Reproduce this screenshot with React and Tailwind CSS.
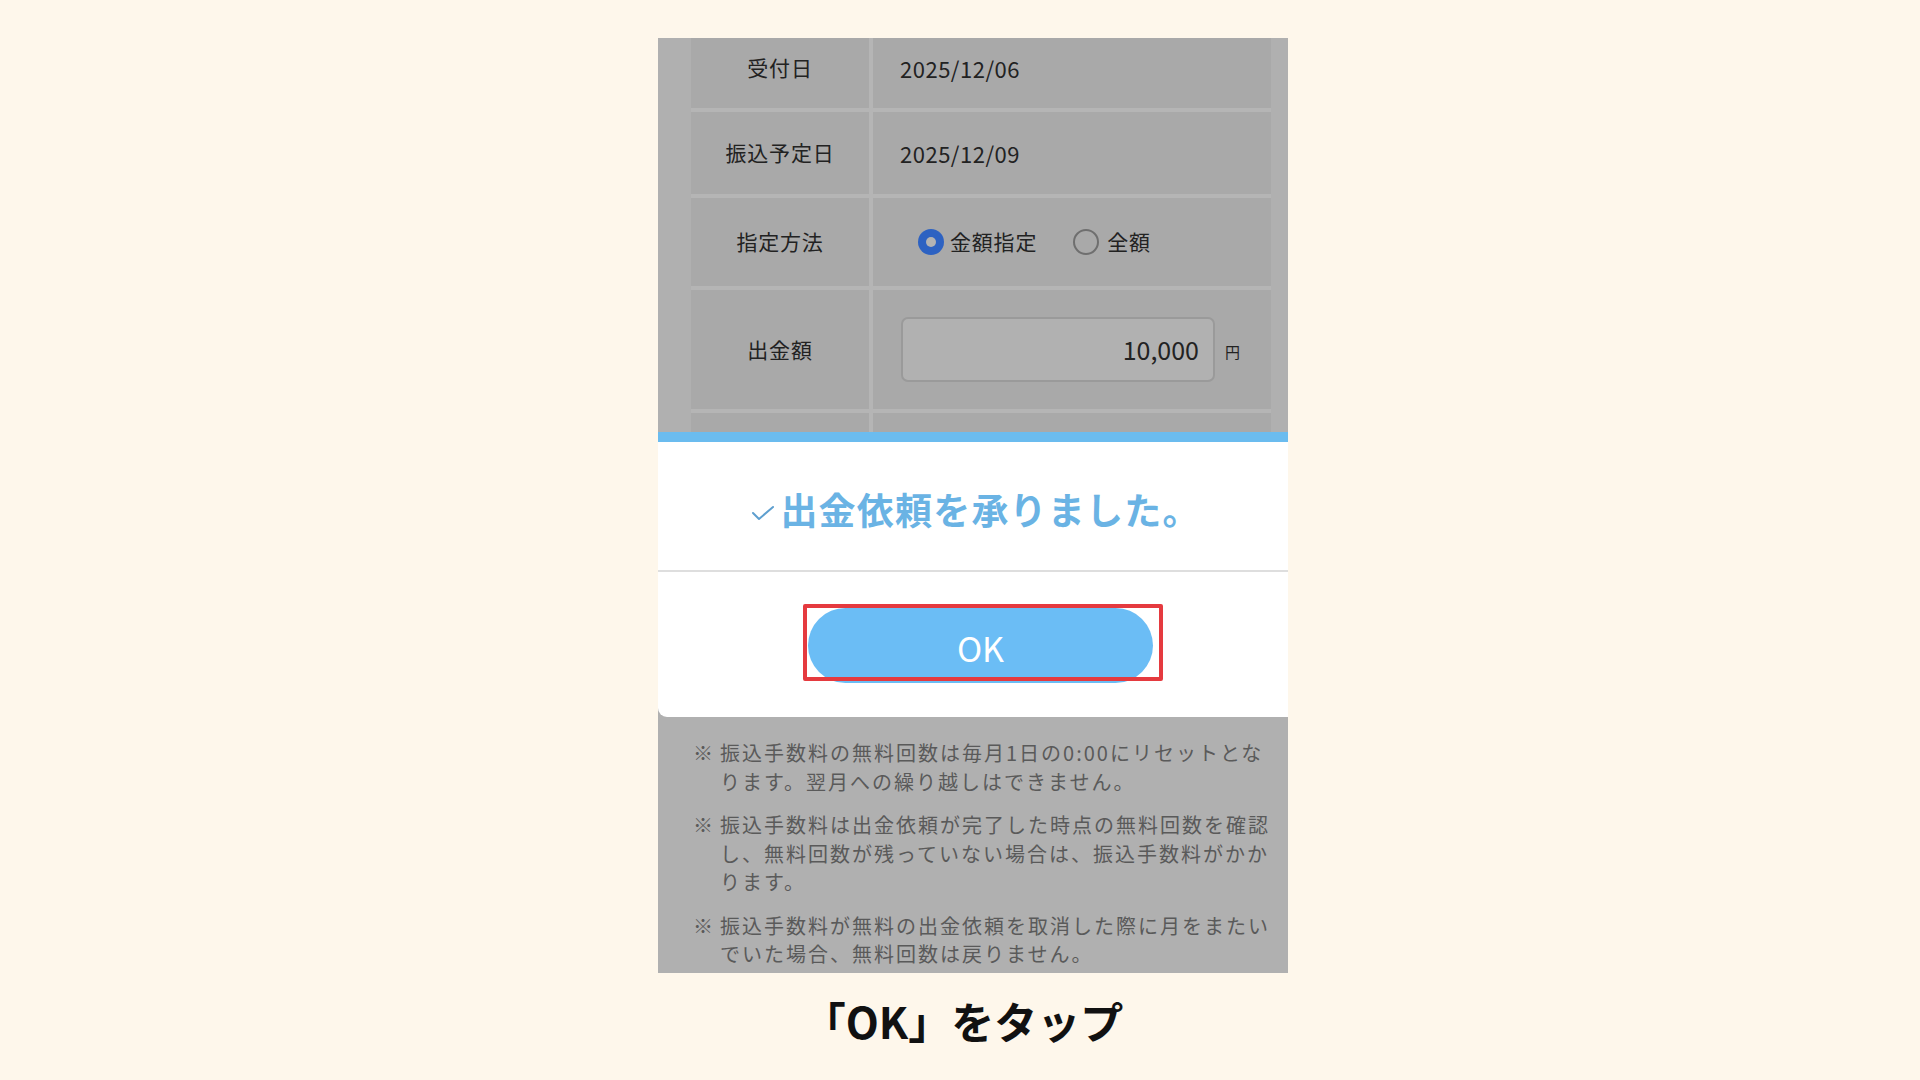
import React from "react";

const FONT = { fontFamily: '"Noto Sans CJK JP", "Noto Sans", sans-serif' };

const ROWS = [
  { label: "受付日", h: "h-[70px]", shift: "pb-[10px]" },
  { label: "振込予定日", h: "h-[82px]", shift: "" },
  { label: "指定方法", h: "h-[88px]", shift: "" },
  { label: "出金額", h: "h-[119px]", shift: "" },
  { label: "", h: "h-[40px]", shift: "" },
];

function Radio({ checked, className = "" }) {
  if (checked) {
    return (
      <span className={`flex h-[26px] w-[26px] shrink-0 items-center justify-center rounded-full bg-[#2d62c2] ${className}`}>
        <span className="h-[10px] w-[10px] rounded-full bg-[#b3b3b3]" />
      </span>
    );
  }
  return <span className={`block h-[26px] w-[26px] shrink-0 rounded-full border-2 border-[#6f6f6f] ${className}`} />;
}

function CellValue({ index }) {
  if (index === 0 || index === 1) {
    return (
      <span className="pl-[27px] text-[22px] tracking-[0.5px] text-[#222]">
        {index === 0 ? "2025/12/06" : "2025/12/09"}
      </span>
    );
  }
  if (index === 2) {
    return (
      <div className="flex items-center pl-[45px] text-[21px] tracking-[0.8px] text-[#222]">
        <Radio checked />
        <span className="ml-[6px]">金額指定</span>
        <Radio className="ml-[36px]" />
        <span className="ml-[8px]">全額</span>
      </div>
    );
  }
  if (index === 3) {
    return (
      <div className="flex items-center pl-[28px]">
        <div className="flex h-[65px] w-[314px] items-center justify-end rounded-[7px] border-2 border-[#9a9a9a] bg-[#b1b1b1] pr-[14px] text-[25px] text-[#222]">
          10,000
        </div>
        <span className="ml-[10px] mt-[6px] text-[15px] text-[#222]">円</span>
      </div>
    );
  }
  return null;
}

const NOTES = [
  ["振込手数料の無料回数は毎月1日の0:00にリセットとな", "ります。翌月への繰り越しはできません。"],
  ["振込手数料は出金依頼が完了した時点の無料回数を確認", "し、無料回数が残っていない場合は、振込手数料がかか", "ります。"],
  ["振込手数料が無料の出金依頼を取消した際に月をまたい", "でいた場合、無料回数は戻りません。"],
];

export default function App() {
  return (
    <div className="min-h-screen w-full bg-[#fef7eb]" style={FONT}>
      <div className="ml-[658px] w-[630px] pt-[38px]">
        <div className="flex h-[935px] flex-col overflow-hidden bg-[#b0b0b0]">
          {/* dimmed form table */}
          <div className="h-[394px] overflow-hidden pl-[33px] pr-[17px]">
            <div className="grid grid-cols-[178px_1fr] gap-x-[4px] gap-y-[4px] bg-[#b5b5b5]">
              {ROWS.map((row, i) => (
                <React.Fragment key={i}>
                  <div
                    className={`flex ${row.h} ${row.shift} items-center justify-center bg-[#a9a9a9] text-[21px] tracking-[0.8px] text-[#222]`}
                  >
                    {row.label}
                  </div>
                  <div className={`flex ${row.h} ${row.shift} items-center bg-[#a9a9a9]`}>
                    <CellValue index={i} />
                  </div>
                </React.Fragment>
              ))}
            </div>
          </div>

          {/* dialog */}
          <div className="flex flex-col rounded-bl-[9px] border-t-[10px] border-[#6bbcef] bg-white">
            <div className="flex h-[128px] items-center justify-center pl-[6px] pt-[8px]">
              <svg width="24" height="16" viewBox="0 0 24 16" className="mr-[5px] mt-[6px]">
                <polyline
                  points="2,8 8,14 22,2"
                  fill="none"
                  stroke="#5e9fcf"
                  strokeWidth="2"
                  strokeLinecap="round"
                  strokeLinejoin="round"
                />
              </svg>
              <span className="text-[37px] font-bold tracking-[1.2px] text-[#6ab3e4]">出金依頼を承りました。</span>
            </div>
            <div className="h-[2px] bg-[#dedede]" />
            <div className="h-[145px] pl-[150px] pt-[36px]">
              <div className="relative w-[345px]">
                <div className="flex h-[75px] w-[345px] items-center justify-center rounded-full bg-[#6bbdf5] pt-[4px] text-[34px] text-white">
                  OK
                </div>
                <div className="absolute left-[-5px] top-[-4px] h-[77px] w-[360px] rounded-[2px] border-[4px] border-[#e53a3f]" />
              </div>
            </div>
          </div>

          {/* notes */}
          <div className="flex-1 pl-[35px] pt-[22px] text-[20px] leading-[28.5px] tracking-[2px] text-[#5a5a5a]">
            {NOTES.map((lines, i) => (
              <div key={i} className={`flex ${i > 0 ? "mt-[15px]" : ""}`}>
                <span className="w-[27px] shrink-0">※</span>
                <div>
                  {lines.map((line, j) => (
                    <div key={j} className="whitespace-nowrap">
                      {line}
                    </div>
                  ))}
                </div>
              </div>
            ))}
          </div>
        </div>

        <div className="mt-[22px] pr-[20px] text-center text-[43px] font-bold leading-[50px] text-[#111]">「OK」をタップ</div>
      </div>
    </div>
  );
}
